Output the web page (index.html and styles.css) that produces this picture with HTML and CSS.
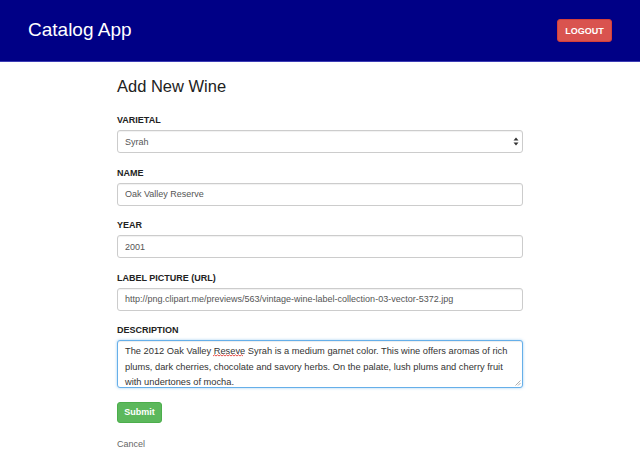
FILE: index.html
```html
<!DOCTYPE html>
<html lang="en">
<head>
<meta charset="utf-8">
<title>Catalog App - Add New Wine</title>
<link rel="stylesheet" href="styles.css">
</head>
<body>
<header class="navbar">
  <a class="brand" href="#">Catalog App</a>
  <button class="btn btn-logout" type="button">LOGOUT</button>
</header>
<main class="container">
  <h1 class="page-title">Add New Wine</h1>
  <form class="wine-form">
    <div class="form-group">
      <label class="field-label" for="varietal">VARIETAL</label>
      <div class="select-wrap">
        <select id="varietal" class="form-control select-control">
          <option>Syrah</option>
        </select>
        <svg class="select-arrows" width="6" height="9" viewBox="0 0 6 9" aria-hidden="true">
          <path d="M3 0.5 L5.5 3.5 L0.5 3.5 Z" fill="#333"/>
          <path d="M3 8.5 L5.5 5.5 L0.5 5.5 Z" fill="#333"/>
        </svg>
      </div>
    </div>
    <div class="form-group">
      <label class="field-label" for="name">NAME</label>
      <input id="name" class="form-control" type="text" value="Oak Valley Reserve">
    </div>
    <div class="form-group">
      <label class="field-label" for="year">YEAR</label>
      <input id="year" class="form-control" type="text" value="2001">
    </div>
    <div class="form-group">
      <label class="field-label" for="label">LABEL PICTURE (URL)</label>
      <input id="label" class="form-control" type="text" value="http://png.clipart.me/previews/563/vintage-wine-label-collection-03-vector-5372.jpg">
    </div>
    <div class="form-group">
      <label class="field-label">DESCRIPTION</label>
      <div class="textarea-wrap">
        <div class="form-control textarea-control" contenteditable="true" role="textbox" aria-multiline="true">The 2012 Oak Valley Reseve Syrah is a medium garnet color. This wine offers aromas of rich plums, dark cherries, chocolate and savory herbs. On the palate, lush plums and cherry fruit with undertones of mocha.</div>
        <svg class="spell-squiggle" width="31" height="3" viewBox="0 0 31 3" aria-hidden="true">
          <path d="M0 2 L1.5 0.8 L3 2 L4.5 0.8 L6 2 L7.5 0.8 L9 2 L10.5 0.8 L12 2 L13.5 0.8 L15 2 L16.5 0.8 L18 2 L19.5 0.8 L21 2 L22.5 0.8 L24 2 L25.5 0.8 L27 2 L28.5 0.8 L30 2" fill="none" stroke="#e0403a" stroke-width="0.9"/>
        </svg>
        <svg class="resize-grip" width="6" height="6" viewBox="0 0 6 6" aria-hidden="true">
          <path d="M0.5 5.5 L5.5 0.5 M3 5.5 L5.5 3" stroke="#999" stroke-width="0.8"/>
        </svg>
      </div>
    </div>
    <button class="btn btn-submit" type="button">Submit</button>
    <a class="cancel-link" href="#">Cancel</a>
  </form>
</main>
</body>
</html>
```
FILE: styles.css
```css
* {
  box-sizing: border-box;
}

body {
  margin: 0;
  background: #fff;
  font-family: "Liberation Sans", Arial, Helvetica, sans-serif;
  color: #333;
}

.navbar {
  height: 62px;
  background: #000086;
  border-bottom: 1px solid #3c3cb4;
  display: flex;
  align-items: center;
  justify-content: space-between;
  padding: 0 28px 1px 28px;
}

.brand {
  color: #fff;
  text-decoration: none;
  font-size: 19px;
  line-height: 22px;
}

.btn {
  font-family: "Liberation Sans", Arial, Helvetica, sans-serif;
  font-weight: bold;
  font-size: 9px;
  color: #fff;
  border-radius: 3px;
  cursor: pointer;
}

.btn-logout {
  background: #d9534f;
  border: 1px solid #d43f3a;
  width: 55px;
  height: 23px;
  padding: 0;
  margin-top: 1px;
}

.container {
  width: 406px;
  margin: 0 auto;
}

.page-title {
  margin: 14px 0 18px;
  font-size: 16.5px;
  line-height: 20px;
  font-weight: normal;
  color: #222;
}

.wine-form {
  display: flex;
  flex-direction: column;
  align-items: flex-start;
}

.form-group {
  width: 100%;
  display: flex;
  flex-direction: column;
  margin-bottom: 13.5px;
}

.field-label {
  font-size: 9px;
  line-height: 12px;
  font-weight: bold;
  color: #222;
  margin-bottom: 4px;
}

.form-control {
  width: 100%;
  height: 23px;
  border: 1px solid #ccc;
  border-radius: 3px;
  background: #fff;
  font-family: "Liberation Sans", Arial, Helvetica, sans-serif;
  font-size: 9px;
  color: #555;
  padding: 0 7px;
  box-shadow: inset 0 1px 1px rgba(0, 0, 0, 0.06);
  outline: none;
}

.select-wrap {
  position: relative;
}

.select-control {
  appearance: none;
  -webkit-appearance: none;
}

.select-arrows {
  position: absolute;
  right: 4px;
  top: 7px;
}

.textarea-wrap {
  position: relative;
}

.textarea-control {
  height: 48px;
  padding: 3px 7px 2px;
  font-size: 9.3px;
  line-height: 15.5px;
  color: #333;
  overflow: hidden;
  border-color: #66afe9;
  box-shadow: inset 0 1px 1px rgba(0, 0, 0, 0.075), 0 0 3px rgba(102, 175, 233, 0.6);
}

.spell-squiggle {
  position: absolute;
  left: 96px;
  top: 14px;
}

.resize-grip {
  position: absolute;
  right: 2px;
  bottom: 2px;
}

.btn-submit {
  background: #5cb85c;
  border: 1px solid #4cae4c;
  width: 45px;
  height: 21px;
  padding: 0;
  margin-top: 0;
}

.cancel-link {
  margin-top: 15px;
  font-size: 9px;
  line-height: 12px;
  color: #666;
  text-decoration: none;
}
```
